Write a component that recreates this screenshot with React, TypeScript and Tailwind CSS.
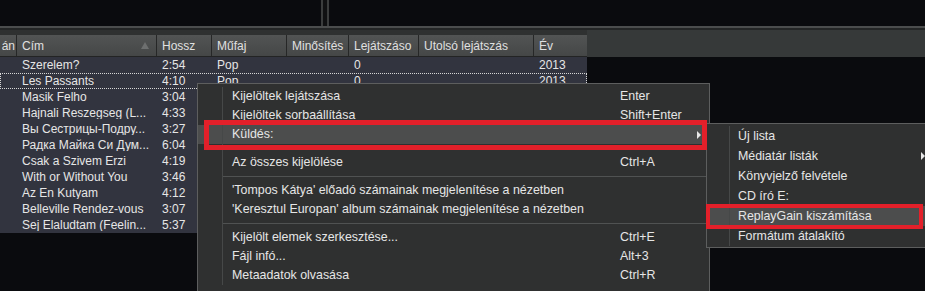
const columns = [
  { label: 'án', w: 'w-[16px]' },
  { label: 'Cím', w: 'w-[140px]' },
  { label: 'Hossz', w: 'w-[55px]' },
  { label: 'Műfaj', w: 'w-[75px]' },
  { label: 'Minősítés', w: 'w-[62px]' },
  { label: 'Lejátszáso', w: 'w-[70px]' },
  { label: 'Utolsó lejátszás', w: 'w-[115px]' },
  { label: 'Év', w: 'w-[54px]' },
];

const tracks = [
  ['Szerelem?', '2:54'],
  ['Les Passants', '4:10'],
  ['Masik Felho', '3:04'],
  ['Hajnali Reszegseg (L...', '4:33'],
  ['Вы Сестрицы-Подру...', '3:27'],
  ['Радка Майка Си Дум...', '6:04'],
  ['Csak a Szivem Erzi', '4:19'],
  ['With or Without You', '3:46'],
  ['Az En Kutyam', '4:12'],
  ['Belleville Rendez-vous', '3:07'],
  ['Sej Elaludtam (Feelin...', '5:37'],
];

type MenuEntry = { label: string; shortcut?: string; arrow?: boolean; active?: boolean } | 'sep';

const mainMenu: MenuEntry[] = [
  { label: 'Kijelöltek lejátszása', shortcut: 'Enter' },
  { label: 'Kijelöltek sorbaállítása', shortcut: 'Shift+Enter' },
  { label: 'Küldés:', arrow: true, active: true },
  'sep',
  { label: 'Az összes kijelölése', shortcut: 'Ctrl+A' },
  'sep',
  { label: "'Tompos Kátya' előadó számainak megjelenítése a nézetben" },
  { label: "'Keresztul Europan' album számainak megjelenítése a nézetben" },
  'sep',
  { label: 'Kijelölt elemek szerkesztése...', shortcut: 'Ctrl+E' },
  { label: 'Fájl infó...', shortcut: 'Alt+3' },
  { label: 'Metaadatok olvasása', shortcut: 'Ctrl+R' },
];

const subMenu: MenuEntry[] = [
  { label: 'Új lista' },
  { label: 'Médiatár listák', arrow: true },
  { label: 'Könyvjelző felvétele' },
  { label: 'CD író E:' },
  { label: 'ReplayGain kiszámítása', active: true },
  { label: 'Formátum átalakító' },
];

function Arrow() {
  return (
    <svg width="4" height="8" viewBox="0 0 4 8" className="shrink-0">
      <polygon points="0,0 4,4 0,8" fill="#e8e8e8" />
    </svg>
  );
}

export default function App() {
  return (
    <div className="relative w-[925px] h-[291px] overflow-hidden bg-[#0a0b0e] text-[12px] text-[#e6e6e6] font-['Liberation_Sans',Arial,sans-serif] leading-none">
      {/* top panes */}
      <div className="flex h-[26px]">
        <div className="w-[321px]" />
        <div className="w-[2px] bg-[#3b3d3d]" />
        <div className="w-[4px] bg-[#101112]" />
        <div className="w-[2px] bg-[#3b3d3d]" />
        <div className="flex-1" />
      </div>
      <div className="h-[2px] bg-[#4b4d4d]" />
      <div className="h-[2px] bg-[#242626]" />

      {/* header panel */}
      <div className="flex h-[27px] bg-[#363939]">
        <div className="w-[587px] bg-[#2f3131] pt-[5px] flex flex-col">
          <div className="flex h-[21px] bg-gradient-to-b from-[#525454] to-[#454747] text-[#e0e0e0]">
            {columns.map((c, i) => (
              <div
                key={c.label}
                className={`${c.w} shrink-0 flex items-center overflow-hidden whitespace-nowrap ${
                  i === 0 ? 'justify-end pr-[1px]' : 'border-l border-[#262727] pl-[5px]'
                }`}
              >
                <span>{c.label}</span>
                {c.label === 'Cím' && (
                  <svg width="8" height="7" viewBox="0 0 8 7" className="ml-auto mr-[7px]">
                    <polygon points="4,0 8,7 0,7" fill="#6d6f6f" />
                  </svg>
                )}
              </div>
            ))}
          </div>
          <div className="h-px bg-[#232424]" />
        </div>
        <div className="flex-1" />
      </div>

      {/* track rows (columns right of Hossz are under the menu from row 3 on) */}
      <div className="w-[587px]">
        {tracks.map(([title, len], i) => (
          <div
            key={title}
            className={`flex h-[16px] items-center bg-[#32343f] whitespace-nowrap ${
              i === 1 ? 'outline-1 outline-dotted outline-[#d6d6d6] -outline-offset-1' : ''
            }`}
          >
            <div className="w-[16px] shrink-0" />
            <div className="w-[140px] shrink-0 pl-[6px] overflow-hidden">{title}</div>
            <div className="w-[55px] shrink-0 pl-[6px]">{len}</div>
            <div className="w-[75px] shrink-0 pl-[6px]">{i < 2 ? 'Pop' : ''}</div>
            <div className="w-[62px] shrink-0" />
            <div className="w-[70px] shrink-0 pl-[6px]">{i < 2 ? '0' : ''}</div>
            <div className="w-[115px] shrink-0" />
            <div className="w-[54px] shrink-0 pl-[6px]">{i < 2 ? '2013' : ''}</div>
          </div>
        ))}
      </div>

      {/* context menu */}
      <div className="absolute left-[197px] top-[83px] w-[513px] h-[220px] bg-[#2f3030] border border-[#5d5e5e] pt-[3px] text-[12.4px]">
        {mainMenu.map((m, i) =>
          m === 'sep' ? (
            <div key={i} className="flex h-[9px]">
              <div className="w-[25px] shrink-0 border-r border-[#464848]" />
              <div className="flex-1 pt-[4px]">
                <div className="h-px bg-[#505252]" />
              </div>
            </div>
          ) : (
            <div key={i} className={`flex h-[19px] items-center whitespace-nowrap ${m.active ? 'bg-[#4c4d4d]' : ''}`}>
              <div className="w-[25px] h-full shrink-0 border-r border-[#464848]" />
              <div className="flex-1 pl-[9px]">{m.label}</div>
              <div className="w-[89px] shrink-0 flex items-center pr-[8px]">
                {m.shortcut}
                {m.arrow && <span className="ml-auto"><Arrow /></span>}
              </div>
            </div>
          )
        )}
      </div>

      {/* submenu */}
      <div className="absolute left-[706px] top-[123px] w-[226px] h-[125px] bg-[#2f3030] border border-[#5d5e5e] pt-[2px] text-[12.4px]">
        {subMenu.map((m, i) =>
          m === 'sep' ? null : (
            <div key={i} className={`flex h-[20px] items-center whitespace-nowrap ${m.active ? 'bg-[#4c4d4d]' : ''}`}>
              <div className="w-[23px] h-full shrink-0 border-r border-[#464848]" />
              <div className="flex-1 pl-[8px]">{m.label}</div>
              {m.arrow && <span className="pr-[6px]"><Arrow /></span>}
            </div>
          )
        )}
      </div>

      {/* annotation boxes */}
      <div className="absolute left-[204px] top-[120px] w-[503px] h-[30px] border-[5px] border-[#e3202a]" />
      <div className="absolute left-[706px] top-[204px] w-[217px] h-[25px] border-[4px] border-[#e3202a]" />
    </div>
  );
}
